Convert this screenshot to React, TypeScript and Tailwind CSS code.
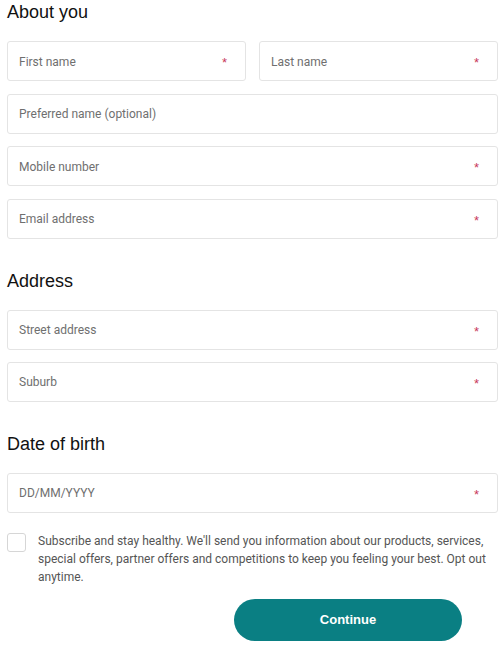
import React from 'react'

function Field({ label, required = true }: { label: string; required?: boolean }) {
  return (
    <div className="h-[40px] flex items-center justify-between border border-[#e4e4e4] rounded-[3px] bg-white pl-[11px] pr-[18px]">
      <span className="text-[12px] text-[#6f6f6f] font-['Roboto',sans-serif] pt-[1px]">{label}</span>
      {required && <span className="text-[13px] leading-none text-[#c8385c] font-['Liberation_Sans',sans-serif] pt-[3px]">*</span>}
    </div>
  )
}

export default function App() {
  return (
    <div className="min-h-screen bg-white pl-[7px] pr-[4px] font-['Liberation_Sans',sans-serif] text-[#111]">
      {/* About you */}
      <h2 className="text-[18px] leading-[24px] mb-[17px]">About you</h2>
      <div className="flex flex-col gap-[12.5px]">
        <div className="grid grid-cols-2 gap-[13px]">
          <Field label="First name" />
          <Field label="Last name" />
        </div>
        <Field label="Preferred name (optional)" required={false} />
        <Field label="Mobile number" />
        <Field label="Email address" />
      </div>

      {/* Address */}
      <h2 className="text-[18px] leading-[24px] mt-[30px] mb-[17px]">Address</h2>
      <div className="flex flex-col gap-[12px]">
        <Field label="Street address" />
        <Field label="Suburb" />
      </div>

      {/* Date of birth */}
      <h2 className="text-[18px] leading-[24px] mt-[30px] mb-[17px]">Date of birth</h2>
      <Field label="DD/MM/YYYY" />

      {/* Subscribe */}
      <div className="flex items-start gap-[12px] mt-[19px]">
        <div className="w-[19px] h-[19px] shrink-0 border border-[#d6d6d6] rounded-[3px] mt-[1px]" />
        <p className="text-[12px] leading-[18px] text-[#555] font-['Roboto',sans-serif]">
          Subscribe and stay healthy. We'll send you information about our products, services, special offers, partner offers and competitions to keep you feeling your best. Opt out anytime.
        </p>
      </div>

      <div className="flex justify-end pr-[36px] mt-[13px]">
        <button className="w-[228px] h-[42px] rounded-full bg-[#0a7f83] text-white text-[13px] font-bold">
          Continue
        </button>
      </div>
    </div>
  )
}
